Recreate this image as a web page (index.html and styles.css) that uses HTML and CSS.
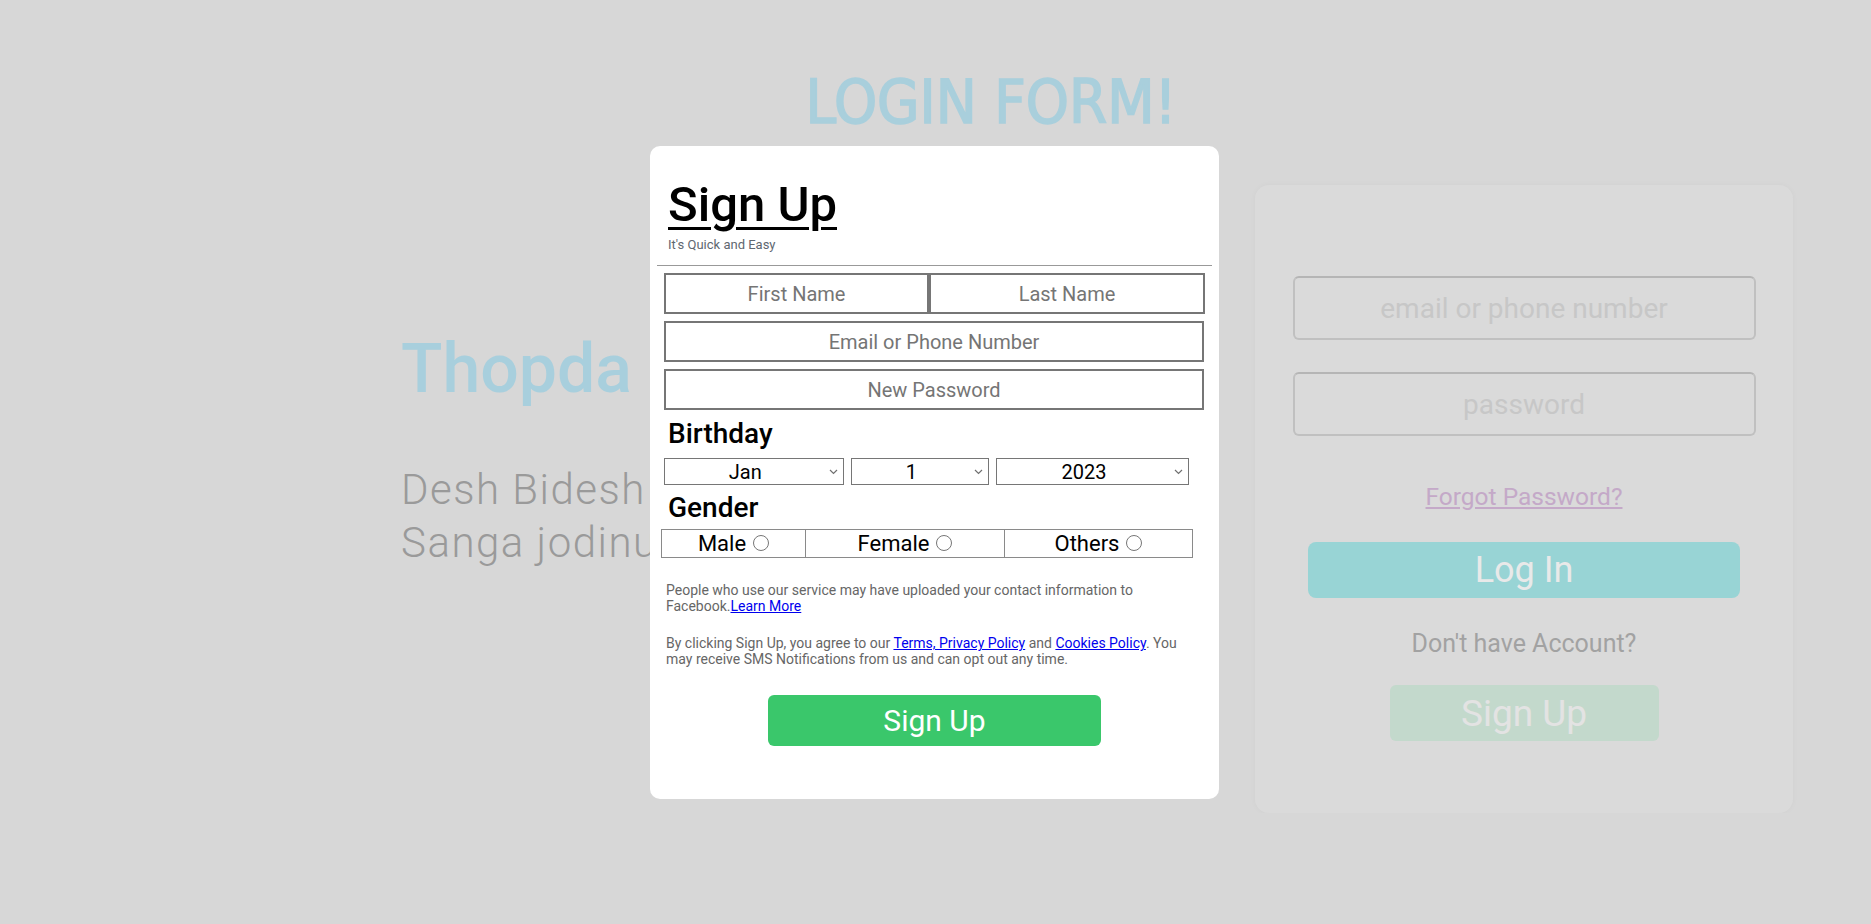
FILE: index.html
```html
<!DOCTYPE html>
<html lang="en">
<head>
    <meta charset="UTF-8">
    <meta name="viewport" content="width=device-width, initial-scale=1.0">
    <title>Login Form</title>
    <link rel="stylesheet" href="styles.css">
</head>
<body>
    <div class="page">
        <h1 class="title">LOGIN FORM!</h1>

        <main class="content">
            <section class="intro">
                <h2 class="brand">Thopda</h2>
                <p class="tagline">Desh Bidesh<br>Sanga jodinus</p>
            </section>

            <section class="login-card">
                <form class="login-form">
                    <input type="text" placeholder="email or phone number">
                    <input type="password" placeholder="password">
                    <div class="forgot"><a href="#">Forgot Password?</a></div>
                    <button type="button" class="btn-login">Log In</button>
                    <p class="no-account">Don't have Account?</p>
                    <button type="button" class="btn-open">Sign Up</button>
                </form>
            </section>
        </main>
    </div>

    <!-- sign up popup -->
    <div class="modal">
        <div class="modal-head">
            <h1>Sign Up</h1>
            <p class="subtitle">It's Quick and Easy</p>
        </div>
        <hr>
        <form class="signup-form">
            <div class="name-row">
                <input type="text" class="first" placeholder="First Name">
                <input type="text" class="last" placeholder="Last Name">
            </div>
            <input type="text" class="wide" placeholder="Email or Phone Number">
            <input type="password" class="wide" placeholder="New Password">

            <h3 class="field-label">Birthday</h3>
            <div class="dob">
                <select class="month">
                    <option>Jan</option>
                    <option>Feb</option>
                    <option>Mar</option>
                </select>
                <select class="day">
                    <option>1</option>
                    <option>2</option>
                    <option>3</option>
                </select>
                <select class="year">
                    <option>2023</option>
                    <option>2022</option>
                    <option>2021</option>
                </select>
            </div>

            <h3 class="field-label gender-label">Gender</h3>
            <div class="gender">
                <label>Male <input type="radio" name="gender"></label>
                <label>Female <input type="radio" name="gender"></label>
                <label>Others <input type="radio" name="gender"></label>
            </div>

            <p class="note">People who use our service may have uploaded your contact information to Facebook.<a href="#">Learn More</a></p>
            <p class="note second">By clicking Sign Up, you agree to our <a href="#">Terms, Privacy Policy</a> and <a href="#">Cookies Policy</a>. You may receive SMS Notifications from us and can opt out any time.</p>

            <button type="button" class="btn-signup">Sign Up</button>
        </form>
    </div>
</body>
</html>
```

FILE: styles.css
```css
/* page behind the popup */
body {
    margin: 0;
    background-color: #d7d7d7;
    font-family: Roboto, "Liberation Sans", sans-serif;
}
.title {
    margin: 0;
    padding: 66px 0 0 111px;
    text-align: center;
    font-family: "DejaVu Sans Condensed", "Liberation Sans Narrow", sans-serif;
    font-stretch: condensed;
    font-size: 61px;
    line-height: 72px;
    font-weight: 400;
    color: #a9cfdc;
    -webkit-text-stroke: 1.6px #a9cfdc;
}
.content {
    display: flex;
    justify-content: space-between;
    align-items: flex-start;
    margin-top: 47px;
    padding: 0 78px 0 401px;
}
.intro {
    margin-top: 144px;
}
.brand {
    margin: 0;
    font-size: 68px;
    font-weight: 500;
    color: #a8cfdd;
}
.tagline {
    margin: 54px 0 0;
    font-size: 42px;
    line-height: 53px;
    letter-spacing: 1.5px;
    font-weight: 300;
    color: #9a9a9a;
}
.login-card {
    box-sizing: border-box;
    width: 538px;
    height: 628px;
    padding-top: 91px;
    background-color: #dadada;
    border-radius: 14px;
    box-shadow: 0 0 6px rgba(0, 0, 0, 0.03);
}
.login-form {
    display: flex;
    flex-direction: column;
    align-items: center;
}
.login-form input {
    box-sizing: border-box;
    width: 463px;
    height: 64px;
    margin: 0 0 32px;
    border: 2px solid #c0c0c0;
    border-top-color: #b5b5b5;
    border-radius: 6px;
    background: transparent;
    font-family: Roboto, sans-serif;
    font-size: 28px;
    text-align: center;
}
.login-form input::placeholder {
    color: #c7c7c7;
}
.forgot {
    margin-top: 14px;
    font-size: 24.5px;
}
.forgot a {
    color: #c4a9c8;
}
.btn-login {
    width: 432px;
    height: 56px;
    margin-top: 31px;
    border: none;
    border-radius: 8px;
    background-color: #98d4d5;
    color: #e9e9e9;
    font-family: Roboto, sans-serif;
    font-size: 36px;
}
.no-account {
    margin: 31px 0 0;
    font-size: 25px;
    color: #a2a2a2;
}
.btn-open {
    width: 269px;
    height: 56px;
    margin-top: 27px;
    border: none;
    border-radius: 6px;
    background-color: #c3d9cc;
    color: #e3e3e3;
    font-family: Roboto, sans-serif;
    font-size: 37px;
}

/* sign up popup */
.modal {
    position: fixed;
    top: 146px;
    left: 650px;
    box-sizing: border-box;
    width: 569px;
    height: 653px;
    padding: 0 7px;
    background-color: #fff;
    border-radius: 10px;
}
.modal-head {
    padding: 30px 11px 0;
}
.modal-head h1 {
    margin: 0;
    font-size: 49px;
    font-weight: 500;
    text-decoration: underline;
    text-decoration-thickness: 3px;
    text-underline-offset: 6px;
    color: #000;
}
.subtitle {
    margin: 4px 0 0;
    font-size: 13px;
    color: #606770;
}
hr {
    margin: 13px 0 7px;
    border: none;
    border-top: 1px solid #999;
}
.signup-form {
    padding: 0 7px;
}
.signup-form input[type="text"],
.signup-form input[type="password"] {
    box-sizing: border-box;
    display: block;
    height: 41px;
    padding: 0;
    border: 2px solid #767676;
    font-family: Roboto, sans-serif;
    font-size: 20px;
    text-align: center;
}
.signup-form input::placeholder {
    color: #757575;
}
.name-row {
    display: flex;
    margin-bottom: 7px;
}
.signup-form .first {
    width: 267px;
    margin: 0;
}
.signup-form .last {
    width: 278px;
    margin: 0;
}
.signup-form .wide {
    width: 540px;
    margin: 0 0 7px;
}
.field-label {
    margin: 8px 0 8px;
    padding-left: 4px;
    font-size: 28px;
    line-height: 32px;
    font-weight: 500;
}
.gender-label {
    margin: 7px 0 5px;
}
.dob {
    display: flex;
    gap: 7.5px;
}
.dob select {
    box-sizing: border-box;
    height: 27px;
    padding: 0 17px 0 0;
    border: 1px solid #767676;
    border-radius: 0;
    appearance: none;
    background: #fff url("data:image/svg+xml,%3Csvg xmlns='http://www.w3.org/2000/svg' width='9' height='6'%3E%3Cpath d='M1 1l3.5 3.5L8 1' fill='none' stroke='%23707070' stroke-width='1.2'/%3E%3C/svg%3E") no-repeat right 5px center;
    color: #000;
    font-family: Roboto, sans-serif;
    font-size: 20px;
    text-align: center;
    text-align-last: center;
}
.month {
    width: 179.5px;
}
.day {
    width: 137.5px;
}
.year {
    width: 193px;
}
.gender {
    display: grid;
    grid-template-columns: 143px 199px 188px;
    height: 29px;
    box-sizing: border-box;
    margin-left: -3px;
    width: 532px;
    border: 1px solid #8a8a8a;
}
.gender label {
    display: flex;
    align-items: center;
    justify-content: center;
    font-size: 22px;
    line-height: 27px;
}
.gender label + label {
    border-left: 1px solid #8a8a8a;
}
.gender input {
    width: 16px;
    height: 16px;
    margin: 0 0 2px 7px;
}
.note {
    margin: 25px 0 0;
    padding: 0 2px;
    font-size: 14px;
    line-height: 15.7px;
    color: #666;
}
.note a {
    color: #0000ee;
}
.note.second {
    margin-top: 22px;
}
.btn-signup {
    display: block;
    width: 333px;
    height: 51px;
    margin: 27px auto 0;
    border: none;
    border-radius: 6px;
    background-color: #3ac76b;
    color: #fff;
    font-family: Roboto, sans-serif;
    font-size: 30px;
}
```
